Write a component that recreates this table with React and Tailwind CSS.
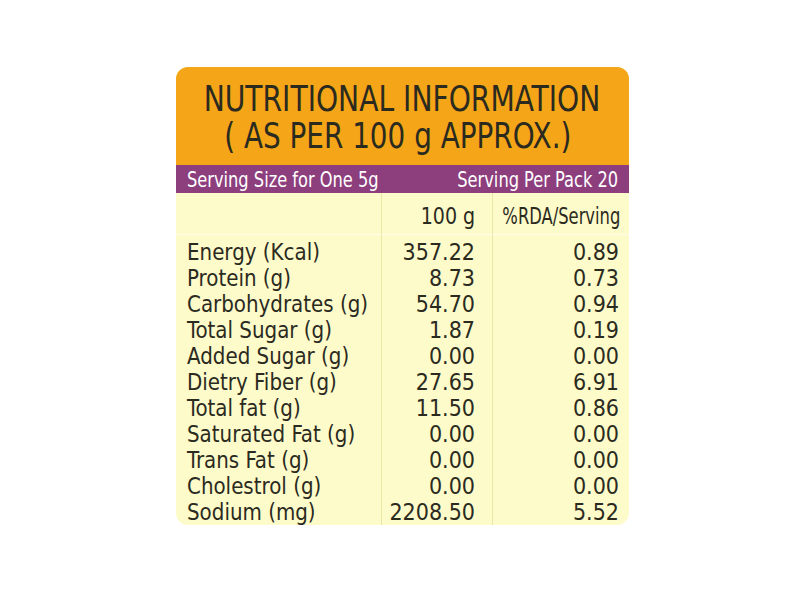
import React from 'react';

const rows = [
  ['Energy (Kcal)', '357.22', '0.89'],
  ['Protein (g)', '8.73', '0.73'],
  ['Carbohydrates (g)', '54.70', '0.94'],
  ['Total Sugar (g)', '1.87', '0.19'],
  ['Added Sugar (g)', '0.00', '0.00'],
  ['Dietry Fiber (g)', '27.65', '6.91'],
  ['Total fat (g)', '11.50', '0.86'],
  ['Saturated Fat (g)', '0.00', '0.00'],
  ['Trans Fat (g)', '0.00', '0.00'],
  ['Cholestrol (g)', '0.00', '0.00'],
  ['Sodium (mg)', '2208.50', '5.52'],
];

const App = () => {
  return (
    <div className="w-[800px] h-[599px] bg-white flex pl-[176px] pt-[67px] font-['DejaVu_Sans_Condensed','DejaVu_Sans',sans-serif] text-[#2b2a1f]">
      <div className="w-[453px] h-[458px] rounded-[12px] overflow-hidden bg-[#fdfbc9] flex flex-col">
        {/* title */}
        <div className="bg-[#f5a518] h-[98px] shrink-0 flex flex-col items-center justify-center text-[36px] leading-[37px] pt-[2px] whitespace-nowrap">
          <div className="scale-x-[0.87] -ml-[1px]">NUTRITIONAL INFORMATION</div>
          <div className="scale-x-[0.86] -ml-[10px]">( AS PER 100 g APPROX.)</div>
        </div>

        <div className="bg-[#8d3e7d] h-[28px] shrink-0 flex items-center justify-between px-[11px] text-white text-[22px] whitespace-nowrap">
          <span className="inline-block scale-x-[0.82] origin-left">Serving Size for One 5g</span>
          <span className="inline-block scale-x-[0.82] origin-right">Serving Per Pack 20</span>
        </div>

        <div className="flex-1 grid grid-cols-[206px_111px_136px] grid-rows-[42px_1fr]">
          <div className="border-r border-[#ebe6a6] border-b border-b-[#fffde8]"></div>
          <div className="border-r border-[#ebe6a6] border-b border-b-[#fffde8] flex items-end justify-end pr-[17px] pb-[1px] text-[23px] whitespace-nowrap">
            <span className="inline-block scale-x-[0.92] origin-right">100 g</span>
          </div>
          <div className="border-b border-b-[#fffde8] flex items-end justify-end pr-[9px] pb-[1px] text-[23px] whitespace-nowrap">
            <span className="inline-block scale-x-[0.79] origin-right">%RDA/Serving</span>
          </div>

          <div className="border-r border-[#ebe6a6] pl-[11px] pt-[4px] text-[23px] leading-[26px] whitespace-nowrap">
            {rows.map((r) => (
              <div key={r[0]} className="scale-x-[0.96] origin-left">{r[0]}</div>
            ))}
          </div>
          <div className="border-r border-[#ebe6a6] pr-[17px] pt-[4px] text-right text-[23px] leading-[26px]">
            {rows.map((r) => (
              <div key={r[0]}>{r[1]}</div>
            ))}
          </div>
          <div className="pr-[10px] pt-[4px] text-right text-[23px] leading-[26px]">
            {rows.map((r) => (
              <div key={r[0]}>{r[2]}</div>
            ))}
          </div>
        </div>
      </div>
    </div>
  );
};

export default App;
